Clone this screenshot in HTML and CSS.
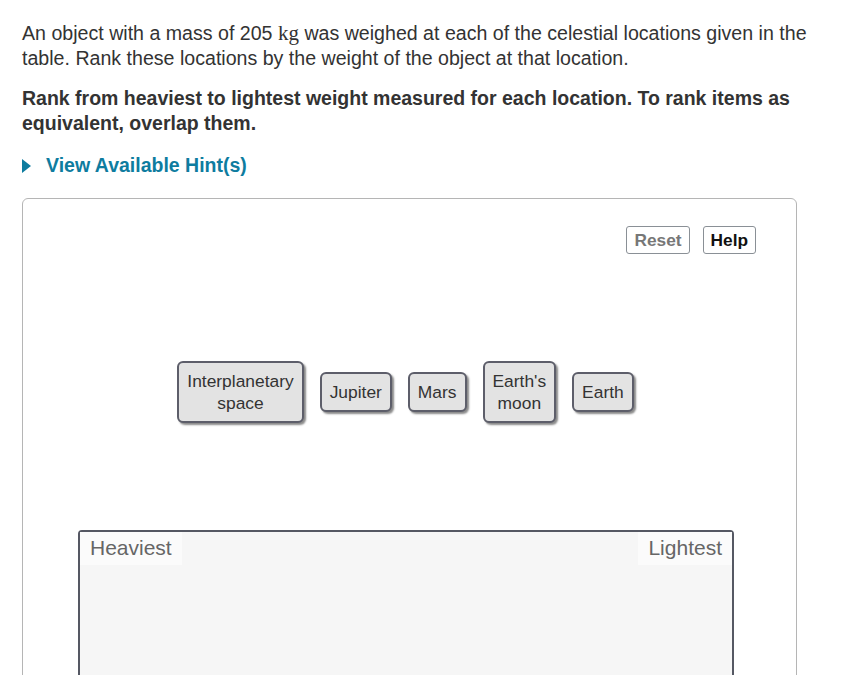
FILE: index.html
```html
<!DOCTYPE html>
<html>
<head>
<meta charset="utf-8">
<link rel="stylesheet" href="styles.css">
</head>
<body>
<div class="page">
  <p class="intro">An object with a mass of 205 <span class="unit">kg</span> was weighed at each of the celestial locations given in the table. Rank these locations by the weight of the object at that location.</p>
  <p class="task">Rank from heaviest to lightest weight measured for each location. To rank items as equivalent, overlap them.</p>
  <div class="hint"><span class="tri"></span><span class="hint-text">View Available Hint(s)</span></div>
  <div class="panel">
    <div class="toolbar">
      <button class="btn reset">Reset</button>
      <button class="btn help">Help</button>
    </div>
    <div class="items">
      <div class="item">Interplanetary<br>space</div>
      <div class="item">Jupiter</div>
      <div class="item">Mars</div>
      <div class="item">Earth's<br>moon</div>
      <div class="item">Earth</div>
    </div>
    <div class="rank">
      <div class="rank-labels">
        <span class="label">Heaviest</span>
        <span class="label">Lightest</span>
      </div>
    </div>
  </div>
</div>
</body>
</html>
```

FILE: styles.css
```css
html, body {
  margin: 0;
  padding: 0;
  background: #fff;
}
.page {
  padding: 21px 0 0 22px;
  width: 800px;
  font-family: "Liberation Sans", Arial, sans-serif;
  color: #333;
}
.intro {
  margin: 0;
  font-size: 19.6px;
  line-height: 25px;
}
.unit {
  font-family: "Liberation Serif", "Times New Roman", serif;
  font-size: 21px;
  line-height: 20px;
}
.task {
  margin: 15px 0 0 0;
  font-size: 19.5px;
  line-height: 24.5px;
  font-weight: bold;
}
.hint {
  margin-top: 18px;
  display: flex;
  align-items: center;
  height: 25px;
}
.tri {
  width: 0;
  height: 0;
  border-top: 7px solid transparent;
  border-bottom: 7px solid transparent;
  border-left: 9px solid #0e7c9f;
  margin-right: 15px;
}
.hint-text {
  font-size: 19.5px;
  font-weight: bold;
  color: #0e7c9f;
}
.panel {
  margin-top: 20px;
  width: 773px;
  height: 520px;
  border: 1px solid #b5b5b5;
  border-radius: 6px;
  box-sizing: content-box;
}
.toolbar {
  display: flex;
  justify-content: flex-end;
  gap: 13px;
  padding: 27px 40px 0 0;
}
.btn {
  height: 28px;
  padding: 0 7px;
  background: #fff;
  border: 1px solid #8a9096;
  border-radius: 3px;
  font-family: "Liberation Sans", Arial, sans-serif;
  font-size: 17.3px;
  font-weight: bold;
}
.reset { color: #777; }
.help { color: #111; }
.items {
  display: flex;
  justify-content: center;
  align-items: center;
  gap: 16px;
  margin-top: 107px;
  padding-right: 8px;
}
.item {
  background: #e3e3e3;
  border: 2px solid #5d5e6a;
  border-radius: 6px;
  box-shadow: 2px 2px 2px #8a8a8a;
  padding: 7px 8px;
  font-size: 17.4px;
  line-height: 22px;
  text-align: center;
  color: #333;
}
.rank {
  margin: 107px 0 0 55px;
  width: 652px;
  height: 200px;
  border: 2px solid #555863;
  border-radius: 4px;
  background: #f6f6f6;
}
.rank-labels {
  display: flex;
  justify-content: space-between;
}
.label {
  background: #fbfbfb;
  padding: 2px 10px 0 10px;
  height: 31px;
  font-size: 21px;
  line-height: 28px;
  color: #666;
}
```
